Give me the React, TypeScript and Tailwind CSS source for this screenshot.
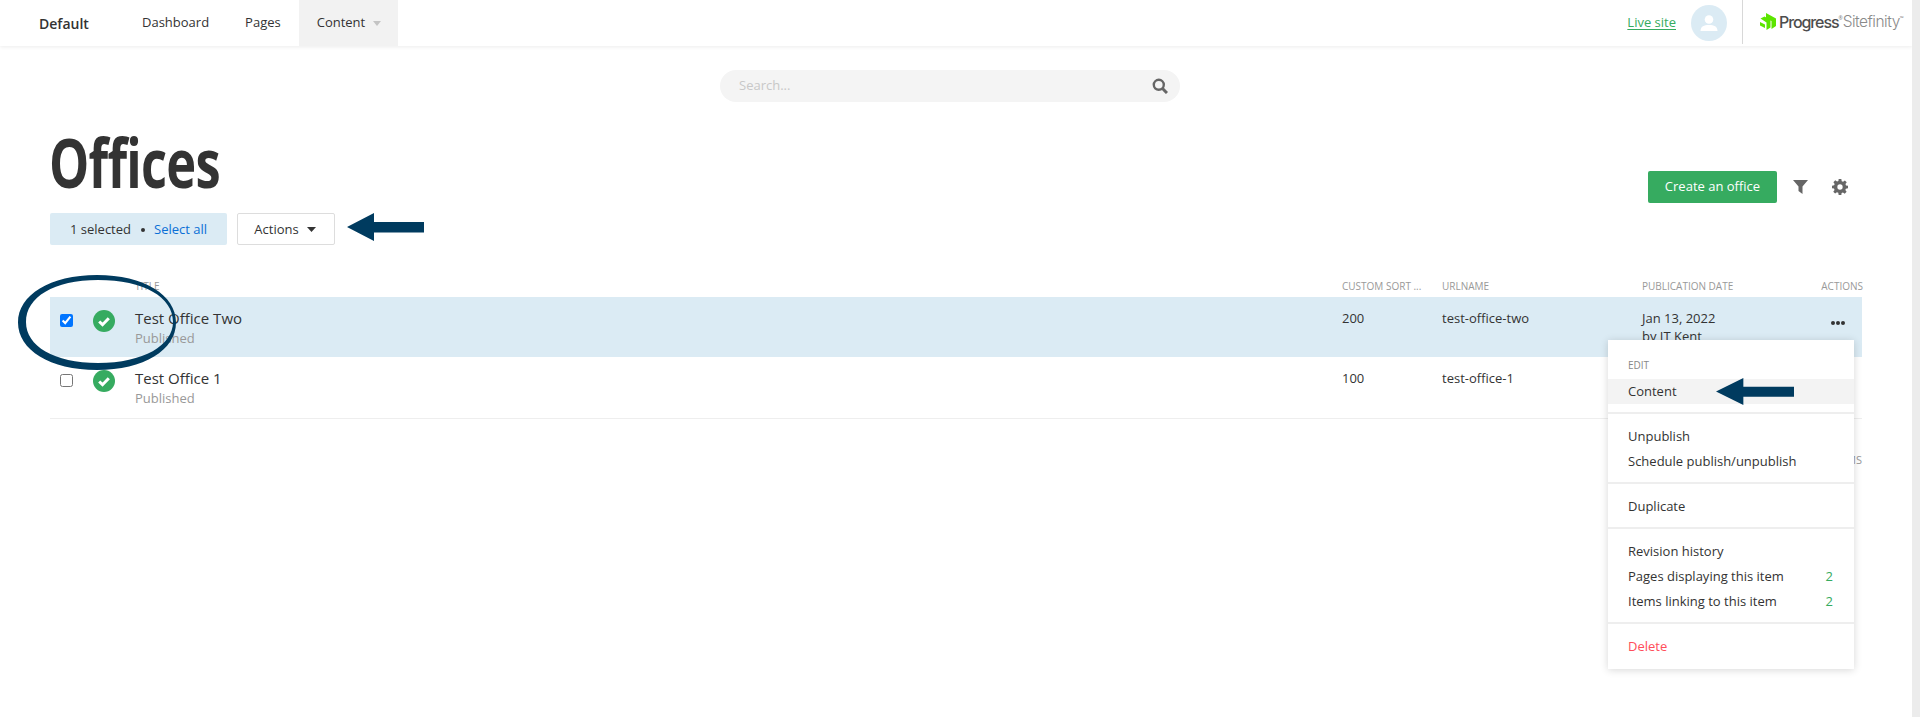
import React from "react";

const Arrow = ({ className }: { className: string }) => (
  <svg className={className} viewBox="0 0 77 28" preserveAspectRatio="none">
    <path d="M0 14 L27 0 V9 H77 V19.500 H27 V28 Z" fill="#003b5f" />
  </svg>
);

const Status = () => (
  <svg width="22" height="22" viewBox="0 0 22 22" className="shrink-0">
    <circle cx="11" cy="11" r="11" fill="#36ab60" />
    <path d="M6.200 11.500 L9.500 14.700 L15.800 8.200" fill="none" stroke="#fff" strokeWidth="3" />
  </svg>
);

const Row = ({ checked, title, sort, url, date, by, dots }: { checked?: boolean; title: string; sort: string; url: string; date?: string; by?: string; dots?: boolean }) => (
  <div className={`grid grid-cols-[85px_1207px_100px_200px_220px] ${checked ? "h-[60px] bg-[#dbebf4]" : "h-[62px] border-b border-[#eeeeee]"}`}>
    <div className="flex items-start gap-[20px] pl-[10px] pt-[13px]">
      <input type="checkbox" defaultChecked={checked} className="w-[13px] h-[13px] mt-[4px] shrink-0" />
      <Status />
    </div>
    <div className="pt-[10px]">
      <div className="text-[15px] leading-[22px] text-[#333]">{title}</div>
      <div className="text-[13px] leading-[18px] text-[#999]">Published</div>
    </div>
    <div className="text-[13px] leading-[18px] pt-[12px] text-[#333]">{sort}</div>
    <div className="text-[13px] leading-[18px] pt-[12px] text-[#333]">{url}</div>
    <div className="relative text-[13px] leading-[18px] pt-[12px] text-[#333]">
      {date && <div>{date}</div>}
      {by && <div>{by}</div>}
      {dots && (
        <div className="absolute left-[189px] top-[24px] flex gap-[1px]">
          <span className="w-[4px] h-[4px] rounded-full bg-[#333]" />
          <span className="w-[4px] h-[4px] rounded-full bg-[#333]" />
          <span className="w-[4px] h-[4px] rounded-full bg-[#333]" />
        </div>
      )}
    </div>
  </div>
);

const MenuItem = ({ label, count, active, red }: { label: string; count?: string; active?: boolean; red?: boolean }) => (
  <div className={`flex justify-between h-[25px] items-center pl-[20px] pr-[21px] text-[13px] ${red ? "text-[#ff4d5a]" : "text-[#333]"} ${active ? "bg-[#f3f3f3]" : ""}`}>
    <span>{label}</span>
    {count && <span className="text-[#36ab60]">{count}</span>}
  </div>
);

export default function App() {
  return (
    <div className="relative flex w-full h-[717px] overflow-hidden bg-white font-['Open_Sans',sans-serif]">
      <div className="flex-1 min-w-0 flex flex-col">
        <header className="h-[46px] flex items-stretch bg-white shadow-[0_1px_4px_rgba(0,0,0,0.08)] shrink-0">
          <div className="w-[142px] pl-[39px] flex items-center text-[14px] font-semibold text-[#333]">Default</div>
          <nav className="flex items-stretch text-[13px] text-[#333]">
            <a className="flex items-center mr-[36px]">Dashboard</a>
            <a className="flex items-center mr-[18px]">Pages</a>
            <a className="flex items-center gap-[8px] bg-[#f2f2f2] w-[99px] pl-[18px]">
              Content
              <svg width="8" height="5" viewBox="0 0 8 5"><path d="M0 0H8L4 5Z" fill="#c4c4c4" /></svg>
            </a>
          </nav>
          <div className="ml-auto flex items-center">
            <a className="text-[13px] text-[#36ab60] underline underline-offset-2">Live site</a>
            <div className="ml-[15px] w-[36px] h-[36px] rounded-full bg-[#dbebf4] flex items-center justify-center">
              <svg width="18" height="18" viewBox="0 0 18 18" fill="#fff">
                <circle cx="9" cy="5.500" r="4.300" />
                <path d="M0.500 17 C0.500 12.500 4 11 9 11 C14 11 17.500 12.500 17.500 17Z" />
              </svg>
            </div>
            <div className="ml-[15px] w-px h-[44px] self-start bg-[#d8d8d8]" />
            <div className="ml-[17px] w-[152px] flex items-center -mt-[3px] whitespace-nowrap">
              <svg width="16" height="17" viewBox="0 0 16 17" className="shrink-0">
                <path d="M6 0 L16 5.500 V13 L11.500 16 V8 L6 5Z M0.500 5.500 L4.500 3.500 L10.500 7 V14.500 L6.500 17 V9.500Z M0 9 L5 11.500 V15 L0 12.500Z" fill="#5ce500" />
              </svg>
              <span className="ml-[3px] font-['Inter',sans-serif] text-[16px] font-medium tracking-[-1.100px] text-[#4d4d4d]">Progress</span>
              <span className="mb-[6px] text-[5px] text-[#777]">®</span>
              <span className="font-['Inter',sans-serif] text-[15.500px] font-light tracking-[-0.5px] text-[#8a8a8a]">Sitefinity</span>
              <span className="mb-[6px] text-[5px] text-[#777]">™</span>
            </div>
          </div>
        </header>

        <div className="flex justify-center pt-[24px] pr-[12px] shrink-0">
          <div className="w-[460px] h-[32px] rounded-full bg-[#f4f4f4] flex items-center justify-between pl-[19px] pr-[12px]">
            <span className="text-[13px] text-[#c8c8c8]">Search...</span>
            <svg width="16" height="16" viewBox="0 0 16 16" fill="none" stroke="#666" strokeWidth="2.400">
              <circle cx="6.800" cy="6.800" r="5" />
              <path d="M10.500 10.500 L15 15" strokeWidth="3" />
            </svg>
          </div>
        </div>

        <div className="px-[50px] flex flex-col shrink-0">
          <div className="flex justify-between">
            <div className="pt-[14px]">
              <h1 className="h-[97px] leading-[91px] -ml-px text-[68px] font-bold text-[#333] origin-left scale-x-[0.745] tracking-[-1px] whitespace-nowrap">Offices</h1>
              <div className="flex gap-[10px] text-[13px]">
                <div className="w-[177px] h-[32px] pt-px rounded-[2px] bg-[#dbebf4] flex items-center pl-[20px] text-[#333]">
                  1 selected
                  <span className="ml-[10px] mr-[9px] w-[4px] h-[4px] rounded-full bg-[#333]" />
                  <span className="text-[#0a6fd6]">Select all</span>
                </div>
                <div className="w-[98px] h-[32px] pt-px pr-[2px] rounded-[2px] border border-[#dddddd] bg-white flex items-center justify-center gap-[8px] text-[#333]">
                  Actions
                  <svg width="9" height="5" viewBox="0 0 9 5"><path d="M0 0H9L4.500 5Z" fill="#333" /></svg>
                </div>
              </div>
            </div>
            <div className="flex items-start pt-[69px] pr-[14px]">
              <button className="w-[129px] h-[32px] rounded-[2px] bg-[#36ab60] text-white text-[13px]">Create an office</button>
              <svg className="ml-[16px] mt-[9px]" width="15" height="14" viewBox="0 0 15 14"><path d="M0 0H15L9.500 6.500V14L5.500 11V6.500Z" fill="#666" /></svg>
              <svg className="ml-[24px] mt-[8px]" width="16" height="16" viewBox="0 0 24 24">
                <path fillRule="evenodd" fill="#666" d="M10 0h4l.6 3.200 2 .8 2.700-1.900 2.800 2.800-1.900 2.700.8 2L24 10v4l-3.200.6-.8 2 1.900 2.700-2.800 2.800-2.700-1.900-2 .8L14 24h-4l-.6-3.200-2-.8-2.700 1.900-2.800-2.800 1.900-2.700-.8-2L0 14v-4l3.200-.6.8-2-1.900-2.700 2.800-2.800 2.700 1.900 2-.8ZM12 8a4 4 0 1 0 0 8 4 4 0 0 0 0-8Z" />
              </svg>
            </div>
          </div>

          <div className="grid grid-cols-[85px_1207px_100px_200px_220px] mt-[30px] h-[22px] text-[10px] text-[#999] uppercase items-center">
            <span />
            <span>Title</span>
            <span>Custom sort ...</span>
            <span>Urlname</span>
            <span className="relative">Publication date<span className="absolute right-[-1px] top-0">Actions</span></span>
          </div>
          <Row checked title="Test Office Two" sort="200" url="test-office-two" date="Jan 13, 2022" by="by IT Kent" dots />
          <Row title="Test Office 1" sort="100" url="test-office-1" />
          <div className="mt-[33px] text-right text-[11px] text-[#999] uppercase">2 items</div>
        </div>
      </div>
      <div className="w-[8px] bg-[#ececec] shrink-0" />

      <div className="absolute left-[1608px] top-[340px] w-[246px] h-[329px] bg-white shadow-[0_1px_8px_rgba(0,0,0,0.16)] flex flex-col">
        <div className="h-[74px] border-b-2 border-[#eeeeee] pt-[18px]">
          <div className="pl-[20px] h-[21px] text-[10px] text-[#888] uppercase">Edit</div>
          <MenuItem label="Content" active />
        </div>
        <div className="h-[70px] border-b-2 border-[#eeeeee] pt-[10px]">
          <MenuItem label="Unpublish" />
          <MenuItem label="Schedule publish/unpublish" />
        </div>
        <div className="h-[45px] border-b-2 border-[#eeeeee] pt-[10px]">
          <MenuItem label="Duplicate" />
        </div>
        <div className="h-[95px] border-b-2 border-[#eeeeee] pt-[10px]">
          <MenuItem label="Revision history" />
          <MenuItem label="Pages displaying this item" count="2" />
          <MenuItem label="Items linking to this item" count="2" />
        </div>
        <div className="pt-[10px]">
          <MenuItem label="Delete" red />
        </div>
      </div>

      <Arrow className="absolute left-[347px] top-[213px] w-[77px] h-[28px]" />
      <Arrow className="absolute left-[1716px] top-[378px] w-[78px] h-[27px]" />
      <svg className="absolute left-[18px] top-[275px]" width="158" height="95" viewBox="0 0 158 95">
        <path fillRule="evenodd" fill="#003b5f" d="M0 47.500 C0 20 32 0 79 0 C126 0 158 20 158 47.500 C158 75 126 95 79 95 C32 95 0 75 0 47.500Z M8 47 C8 71 36 88 80 88 C126 88 155 70 155 47 C155 22 126 5 80 5 C36 5 8 22 8 47Z" />
      </svg>
    </div>
  );
}
